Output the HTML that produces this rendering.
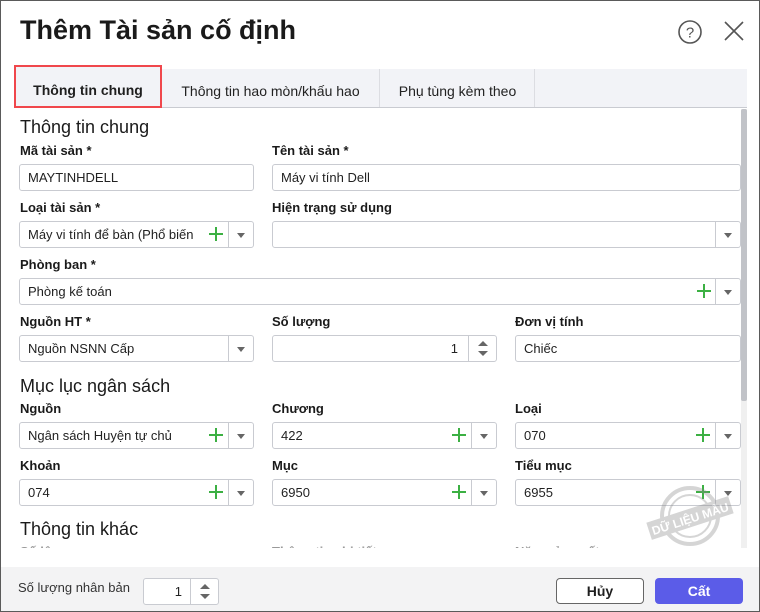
<!DOCTYPE html>
<html><head><meta charset="utf-8"><style>
*{box-sizing:border-box;margin:0;padding:0}
body{width:760px;height:612px;overflow:hidden;background:#fff;font-family:"Liberation Sans","Noto Sans CJK SC",sans-serif;color:#1f1f1f;position:relative}
.frame{position:absolute;left:0;top:0;width:760px;height:612px;border:1px solid #5a5a5a;z-index:10;pointer-events:none}
.a{position:absolute}
.title{left:20px;top:15px;font-size:27px;font-weight:bold;color:#1a1a1a}
.tabs{left:14px;top:69px;width:733px;height:39px;background:#f2f3f7;border-bottom:1px solid #c9cbd1}
.tab{position:absolute;top:0;height:38px;line-height:44px;font-size:14px;color:#222;text-align:center}
.lbl{font-size:13px;font-weight:bold;color:#1a1a1a}
.sec{font-size:18px;color:#1a1a1a}
.in{height:27px;border:1px solid #c9cbd1;border-radius:3px;background:#fff;font-size:13px;line-height:25px;padding-left:8px;color:#222;overflow:hidden;white-space:nowrap}
.dd{position:absolute;right:0;top:0;width:25px;height:25px;border-left:1px solid #c9cbd1}
.dd:after{content:"";position:absolute;left:8px;top:11px;border-left:4.5px solid transparent;border-right:4.5px solid transparent;border-top:5px solid #666}
.pl{position:absolute;top:5px;width:14px;height:14px}
.pl:before{content:"";position:absolute;left:6px;top:0;width:2px;height:14px;background:#3cb043}
.pl:after{content:"";position:absolute;left:0;top:6px;width:14px;height:2px;background:#3cb043}
.sp{position:absolute;right:0;top:0;width:28px;height:25px;border-left:1px solid #c9cbd1}
.sp:before{content:"";position:absolute;left:9px;top:5px;border-left:5px solid transparent;border-right:5px solid transparent;border-bottom:5px solid #666}
.sp:after{content:"";position:absolute;left:9px;top:15px;border-left:5px solid transparent;border-right:5px solid transparent;border-top:5px solid #666}
</style></head><body>
<div class="frame"></div>
<div class="a title">Thêm Tài sản cố định</div>
<svg class="a" style="left:677px;top:19px" width="26" height="26" viewBox="0 0 26 26"><circle cx="13" cy="13" r="11" fill="none" stroke="#555" stroke-width="1.6"/><text x="13" y="18.5" text-anchor="middle" font-size="15" font-family="Liberation Sans" fill="#555">?</text></svg>
<svg class="a" style="left:723px;top:20px" width="22" height="22" viewBox="0 0 22 22"><path d="M2 2L20 20M20 2L2 20" stroke="#555" stroke-width="1.6"/></svg>

<div class="a tabs">
 <div class="tab" style="left:148px;width:218px;border-right:1px solid #dcdde2">Thông tin hao mòn/khấu hao</div>
 <div class="tab" style="left:367px;width:154px;border-right:1px solid #dcdde2">Phụ tùng kèm theo</div>
</div>
<div class="a" style="left:14px;top:65px;width:148px;height:43px;border:2px solid #f0474c;background:#f2f3f7;font-size:14px;font-weight:bold;text-align:center;line-height:46px">Thông tin chung</div>

<div class="a" style="left:741px;top:109px;width:6px;height:439px;background:#f0f0f0"></div>
<div class="a" style="left:741px;top:109px;width:6px;height:292px;background:#c1c3c8;border-radius:2px"></div>

<div class="a sec" style="left:20px;top:117px">Thông tin chung</div>
<div class="a lbl" style="left:20px;top:143px">Mã tài sản *</div>
<div class="a lbl" style="left:272px;top:143px">Tên tài sản *</div>
<div class="a in" style="left:19px;top:164px;width:235px">MAYTINHDELL</div>
<div class="a in" style="left:272px;top:164px;width:469px">Máy vi tính Dell</div>

<div class="a lbl" style="left:20px;top:200px">Loại tài sản *</div>
<div class="a lbl" style="left:272px;top:200px">Hiện trạng sử dụng</div>
<div class="a in" style="left:19px;top:221px;width:235px">Máy vi tính để bàn (Phổ biến<div class="a" style="left:185px;top:0;width:24px;height:25px;background:#fff"></div><div class="pl" style="right:30px"></div><div class="dd"></div></div>
<div class="a in" style="left:272px;top:221px;width:469px"><div class="dd"></div></div>

<div class="a lbl" style="left:20px;top:257px">Phòng ban *</div>
<div class="a in" style="left:19px;top:278px;width:722px">Phòng kế toán<div class="pl" style="right:29px"></div><div class="dd"></div></div>

<div class="a lbl" style="left:20px;top:314px">Nguồn HT *</div>
<div class="a lbl" style="left:272px;top:314px">Số lượng</div>
<div class="a lbl" style="left:515px;top:314px">Đơn vị tính</div>
<div class="a in" style="left:19px;top:335px;width:235px">Nguồn NSNN Cấp<div class="dd"></div></div>
<div class="a in" style="left:272px;top:335px;width:225px;text-align:right;padding-right:38px">1<div class="sp"></div></div>
<div class="a in" style="left:515px;top:335px;width:226px">Chiếc</div>

<div class="a sec" style="left:20px;top:376px">Mục lục ngân sách</div>
<div class="a lbl" style="left:20px;top:401px">Nguồn</div>
<div class="a lbl" style="left:272px;top:401px">Chương</div>
<div class="a lbl" style="left:515px;top:401px">Loại</div>
<div class="a in" style="left:19px;top:422px;width:235px">Ngân sách Huyện tự chủ<div class="pl" style="right:30px"></div><div class="dd"></div></div>
<div class="a in" style="left:272px;top:422px;width:225px">422<div class="pl" style="right:30px"></div><div class="dd"></div></div>
<div class="a in" style="left:515px;top:422px;width:226px">070<div class="pl" style="right:30px"></div><div class="dd"></div></div>

<div class="a lbl" style="left:20px;top:458px">Khoản</div>
<div class="a lbl" style="left:272px;top:458px">Mục</div>
<div class="a lbl" style="left:515px;top:458px">Tiểu mục</div>
<div class="a in" style="left:19px;top:479px;width:235px">074<div class="pl" style="right:30px"></div><div class="dd"></div></div>
<div class="a in" style="left:272px;top:479px;width:225px">6950<div class="pl" style="right:30px"></div><div class="dd"></div></div>
<div class="a in" style="left:515px;top:479px;width:226px">6955<div class="pl" style="right:30px"></div><div class="dd"></div></div>

<svg class="a" style="left:645px;top:483px;opacity:.35" width="90" height="70" viewBox="0 0 90 70"><circle cx="45" cy="33" r="28" fill="none" stroke="#888" stroke-width="4"/><circle cx="45" cy="33" r="21" fill="none" stroke="#888" stroke-width="2"/><g transform="rotate(-18 45 35)"><rect x="2" y="26" width="86" height="18" fill="#888"/><text x="45" y="40" text-anchor="middle" font-size="12" font-weight="bold" fill="#fff" font-family="Liberation Sans">DỮ LIỆU MẪU</text></g></svg>

<div class="a sec" style="left:20px;top:519px">Thông tin khác</div>
<div class="a lbl" style="left:20px;top:544px;color:#999">Số lô</div>
<div class="a lbl" style="left:272px;top:544px;color:#999">Thông tin chi tiết</div>
<div class="a lbl" style="left:515px;top:544px;color:#999">Năm sản xuất</div>
<div class="a" style="left:0;top:548px;width:741px;height:19px;background:#fff"></div>

<div class="a" style="left:1px;top:567px;width:758px;height:44px;background:#f3f3f4"></div>
<div class="a" style="left:18px;top:580px;font-size:13px;color:#333">Số lượng nhân bản</div>
<div class="a in" style="left:143px;top:578px;width:76px;text-align:right;padding-right:36px">1<div class="sp"></div></div>
<div class="a" style="left:556px;top:578px;width:88px;height:26px;border:1px solid #666;border-radius:4px;background:#fff;text-align:center;line-height:24px;font-size:14px;font-weight:bold">Hủy</div>
<div class="a" style="left:655px;top:578px;width:88px;height:26px;border-radius:4px;background:#5b5ce8;color:#fff;text-align:center;line-height:26px;font-size:14px;font-weight:bold">Cất</div>
</body></html>
